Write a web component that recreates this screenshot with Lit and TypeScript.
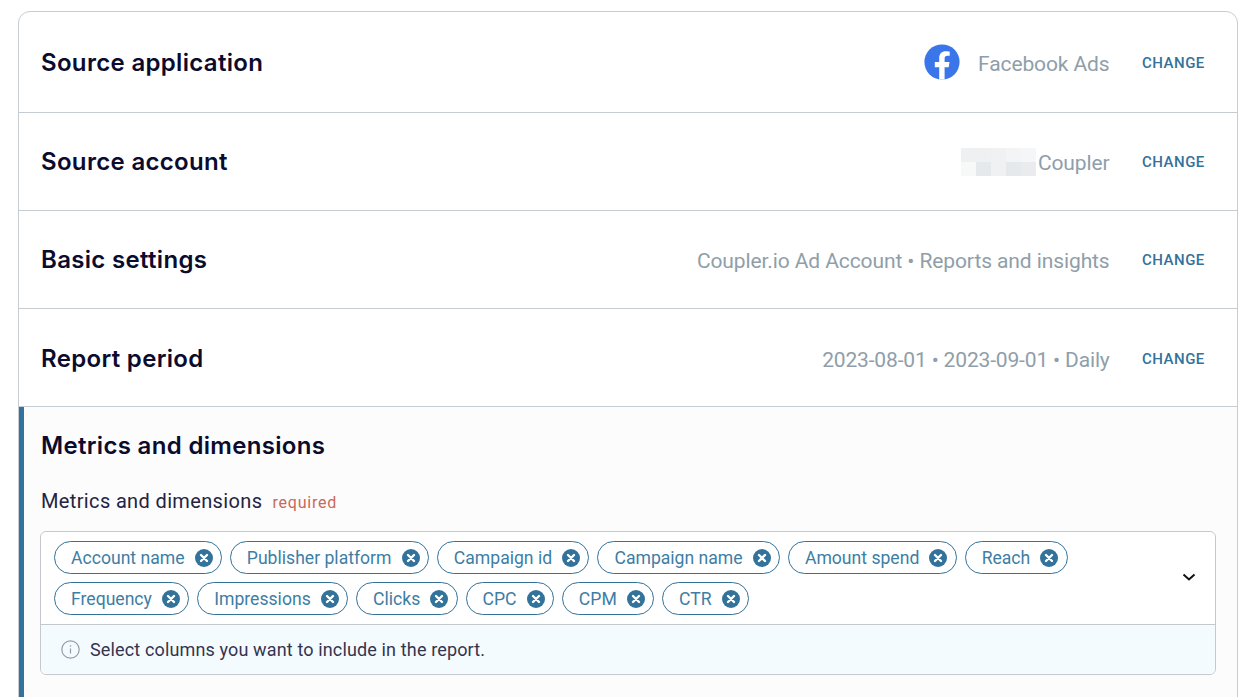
import { LitElement, html, css, svg } from "lit";
import { customElement } from "lit/decorators.js";

const rows = [
  { title: "Source application", value: "Facebook Ads", cls: "first", icon: true },
  { title: "Source account", value: "Coupler", cls: "", blur: true },
  { title: "Basic settings", value: "Coupler.io Ad Account • Reports and insights", cls: "" },
  { title: "Report period", value: "2023-08-01 • 2023-09-01 • Daily", cls: "last" },
];
const chipRows = [
  ["Account name", "Publisher platform", "Campaign id", "Campaign name", "Amount spend", "Reach"],
  ["Frequency", "Impressions", "Clicks", "CPC", "CPM", "CTR"],
];
const blur = ["#eef0f1", "#eef0f1", "#eff1f2", "#f3f4f5", "#f5f6f7", "#f7f8f8", "#e6e9eb", "#eff1f2", "#e6e9eb", "#e9ebec"];

const closeIcon = svg`<circle cx="9" cy="9" r="9" fill="#33729a"/><path d="M6 6l6 6M12 6l-6 6" stroke="#fff" stroke-width="2.4" stroke-linecap="round"/>`;

@customElement("app-root")
export class AppRoot extends LitElement {
  static styles = css`
    :host { display: block; height: 697px; overflow: hidden; background: #fff; font-family: "Inter", sans-serif; }
    .page { padding: 11px 19px 0 18px; }
    .card { border: 1px solid #c5ccd2; border-radius: 12px; overflow: hidden; height: 760px; box-sizing: border-box; }
    .row { display: flex; align-items: center; height: 98px; box-sizing: border-box; padding: 0 32px 0 22px; border-bottom: 1px solid #c5ccd2; }
    .row.first { height: 101px; }
    .title { font-size: 24px; font-weight: 600; color: #0b0b2e; letter-spacing: 0.32px; flex: 1; }
    .h { font-size: 24px; font-weight: 600; color: #0b0b2e; letter-spacing: 0.32px; padding-left: 1px; }
    .value { font-family: "Roboto", sans-serif; font-size: 21px; color: #8f9ea9; margin: 2px 32.4px 0 0; letter-spacing: -0.1px; white-space: nowrap; }
    .fb { width: 36px; height: 36px; margin-right: 18px; }
    .blur { display: grid; grid-template-columns: repeat(5, 15px); grid-auto-rows: 14px; margin-right: 2px; }
    .change { font-family: "Roboto", sans-serif; font-size: 15px; font-weight: 500; letter-spacing: 0.5px; color: #33729a; width: 63px; white-space: nowrap; }
    .first .value { margin-top: 4px; }
    .first .change { margin-top: 2px; }
    .last .title { margin-top: 2px; }
    .last .value { margin-top: 4px; letter-spacing: -0.16px; }
    .last .change { margin-top: 2px; }
    .section { background: #fcfcfc; border-left: 5px solid #33729a; padding: 24px 21px 0 16px; height: 300px; }
    .label { display: flex; align-items: baseline; margin-top: 29px; padding-left: 1px; font-family: "Roboto", sans-serif; font-size: 20px; color: #232342; letter-spacing: 0.36px; }
    .req { font-size: 16px; color: #c9695a; margin-left: 10px; letter-spacing: 0.8px; }
    .box { margin-top: 18px; border: 1px solid #c5c9cd; border-radius: 6px; overflow: hidden; background: #fff; }
    .top { display: flex; align-items: flex-start; height: 93px; box-sizing: border-box; padding: 9px 18px 0 13px; border-bottom: 1px solid #c5c9cd; }
    .chips { flex: 1; display: flex; flex-direction: column; gap: 8px; }
    .chip-row { display: flex; gap: 8px; }
    .chip { display: flex; align-items: center; gap: 10px; height: 33px; box-sizing: border-box; padding: 0 8.3px 0 16px; border: 1px solid #33729a; border-radius: 17px; font-family: "Roboto", sans-serif; font-size: 17.6px; color: #3d7ea4; white-space: nowrap; }
    .x { width: 18px; height: 18px; flex: none; }
    .chev { width: 16px; height: 16px; margin-top: 28px; }
    .hint { display: flex; align-items: center; gap: 10px; height: 49px; padding-left: 20px; background: #f4fbfe; font-family: "Roboto", sans-serif; font-size: 18px; color: #34344f; letter-spacing: 0.14px; }
    .info { width: 19px; height: 19px; flex: none; }
  `;

  render() {
    return html`<div class="page"><div class="card">
      ${rows.map((r) => html`<div class="row ${r.cls}">
        <div class="title">${r.title}</div>
        ${r.icon ? html`<svg class="fb" viewBox="0 0 36 36"><circle cx="18" cy="18" r="17.6" fill="#3b75ea"/><path d="M15.2 35.4V23.2h-4.4V18h4.4v-3.9c0-4.4 2.6-6.9 6.6-6.9 1.9 0 3.9.35 3.9.35v4.3h-2.2c-2.2 0-2.9 1.35-2.9 2.75V18h4.9l-.8 5.2h-4.1v12.2z" fill="#fff"/></svg>` : ""}
        ${r.blur ? html`<div class="blur">${blur.map((c) => html`<span style="background:${c}"></span>`)}</div>` : ""}
        <div class="value">${r.value}</div>
        <div class="change">CHANGE</div>
      </div>`)}
      <div class="section">
        <div class="h">Metrics and dimensions</div>
        <div class="label">Metrics and dimensions<span class="req">required</span></div>
        <div class="box">
          <div class="top">
            <div class="chips">
              ${chipRows.map((cr) => html`<div class="chip-row">${cr.map((c) => html`<div class="chip">${c}<svg class="x" viewBox="0 0 18 18">${closeIcon}</svg></div>`)}</div>`)}
            </div>
            <svg class="chev" viewBox="0 0 16 16"><path d="M2.5 5.5L8 10.5l5.5-5" fill="none" stroke="#111" stroke-width="2"/></svg>
          </div>
          <div class="hint">
            <svg class="info" viewBox="0 0 19 19"><circle cx="9.5" cy="9.5" r="8.7" fill="none" stroke="#8f9ea9" stroke-width="1.2"/><path d="M9.5 8.5v5" stroke="#8f9ea9" stroke-width="1.2"/><circle cx="9.5" cy="6" r=".8" fill="#8f9ea9"/></svg>
            Select columns you want to include in the report.
          </div>
        </div>
      </div>
    </div></div>`;
  }
}
